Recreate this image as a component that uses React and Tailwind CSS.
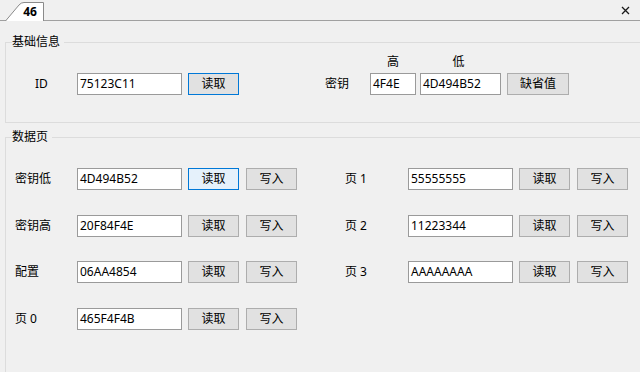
import React from "react";

const font = { fontFamily: '"Noto Sans", "Noto Sans CJK SC", sans-serif' };

function Input({ value, w = "w-[105px]" }) {
  return (
    <div className={`${w} h-[22px] bg-white border border-[#9a9a9a] flex items-center pl-[2px] text-[12px] text-black leading-none`}>
      {value}
    </div>
  );
}

function Btn({ label, w = "w-[51px]", variant = "normal" }) {
  const cls =
    variant === "focus"
      ? "bg-[#e1e1e1] border-[#0078d7]"
      : variant === "hover"
      ? "bg-[#e5f1fb] border-[#0078d7]"
      : "bg-[#e1e1e1] border-[#adadad]";
  return (
    <div className={`${w} h-[22px] border ${cls} flex items-center justify-center text-[12px] text-black leading-none`}>
      {label}
    </div>
  );
}

function Row({ label, value, hover, labelW }) {
  return (
    <div className="flex items-center h-[22px]">
      <div className={`${labelW} text-[12px] text-black`}>{label}</div>
      <Input value={value} />
      <div className="w-[6px]" />
      <Btn label="读取" variant={hover ? "hover" : "normal"} />
      <div className="w-[7px]" />
      <Btn label="写入" />
    </div>
  );
}

export default function App() {
  return (
    <div className="w-[640px] h-[372px] bg-[#f0f0f0] overflow-hidden" style={font}>
      {/* tab strip */}
      <div className="h-[21px] flex items-end border-b border-[#a0a0a0]">
        <div className="relative w-[39px] h-[19px] ml-[5px] -mb-px flex items-center justify-center">
          <svg className="absolute inset-0" width="39" height="19" viewBox="0 0 39 19">
            <path d="M0.5 19 L14 3 Q16 0.5 19 0.5 L38.5 0.5 L38.5 19" fill="#ffffff" stroke="#8a8a8a" strokeWidth="1" />
          </svg>
          <span className="relative text-[12px] font-bold text-black pl-[11px] leading-none">46</span>
        </div>
        <div className="ml-auto mr-[10px] mb-[5px]">
          <svg width="9" height="9" viewBox="0 0 9 9">
            <path d="M1 1 L8 8 M8 1 L1 8" stroke="#1a1a1a" strokeWidth="1.3" />
          </svg>
        </div>
      </div>

      {/* group 1 */}
      <div className="pl-[5px] pt-[21px]">
        <div className="relative w-[660px] h-[81px] border border-[#dcdcdc]">
          <div className="absolute -top-[9px] left-[6px] bg-[#f0f0f0] pr-[4px] text-[12px] leading-[16px] text-black">
            基础信息
          </div>
          <div className="flex items-end pt-[12px]">
            <div className="flex items-center h-[22px] pl-[29px]">
              <div className="w-[42px] text-[12px] text-black">ID</div>
              <Input value="75123C11" />
              <div className="w-[6px]" />
              <Btn label="读取" variant="focus" />
            </div>
            <div className="flex items-end ml-[86px]">
              <div className="w-[45px] h-[22px] flex items-center text-[12px] text-black">密钥</div>
              <div className="flex flex-col">
                <div className="h-[14px] mb-[4px] flex text-[12px] leading-[14px] text-black">
                  <div className="w-[46px] text-center">高</div>
                  <div className="w-[4px]" />
                  <div className="w-[81px] text-center pr-[4px]">低</div>
                </div>
                <div className="flex items-center">
                  <Input value="4F4E" w="w-[46px]" />
                  <div className="w-[4px]" />
                  <Input value="4D494B52" w="w-[81px]" />
                  <div className="w-[6px]" />
                  <Btn label="缺省值" w="w-[62px]" />
                </div>
              </div>
            </div>
          </div>
        </div>
      </div>

      {/* group 2 */}
      <div className="pl-[5px] pt-[14px]">
        <div className="relative w-[660px] h-[260px] border border-[#dcdcdc]">
          <div className="absolute -top-[9px] left-[6px] bg-[#f0f0f0] pr-[4px] text-[12px] leading-[16px] text-black">
            数据页
          </div>
          <div className="flex pt-[30px] pl-[9px]">
            <div className="flex flex-col gap-[24.5px]">
              <Row label="密钥低" value="4D494B52" hover labelW="w-[62px]" />
              <Row label="密钥高" value="20F84F4E" labelW="w-[62px]" />
              <Row label="配置" value="06AA4854" labelW="w-[62px]" />
              <Row label="页 0" value="465F4F4B" labelW="w-[62px]" />
            </div>
            <div className="flex flex-col gap-[24.5px] ml-[48px]">
              <Row label="页 1" value="55555555" labelW="w-[63px]" />
              <Row label="页 2" value="11223344" labelW="w-[63px]" />
              <Row label="页 3" value="AAAAAAAA" labelW="w-[63px]" />
            </div>
          </div>
        </div>
      </div>
    </div>
  );
}
